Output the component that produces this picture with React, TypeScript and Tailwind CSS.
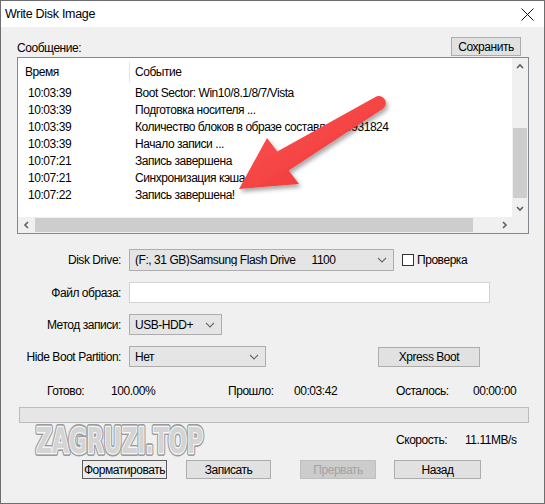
import React from "react";

const rows = [
  ["10:03:39", "Boot Sector: Win10/8.1/8/7/Vista"],
  ["10:03:39", "Подготовка носителя ..."],
  ["10:03:39", "Количество блоков в образе составляет 3931824"],
  ["10:03:39", "Начало записи ..."],
  ["10:07:21", "Запись завершена"],
  ["10:07:21", "Синхронизация кэша ..."],
  ["10:07:22", "Запись завершена!"],
];

function Chevron({ dir, className = "" }: { dir: "up" | "down" | "left" | "right"; className?: string }) {
  const pts = {
    up: "1,5 4,2 7,5",
    down: "1,2 4,5 7,2",
    left: "5,1 2,4 5,7",
    right: "3,1 6,4 3,7",
  }[dir];
  return (
    <svg width="8" height="8" viewBox="0 0 8 8" className={className}>
      <polyline points={pts} fill="none" stroke="#606060" strokeWidth="1.6" />
    </svg>
  );
}

function ComboArrow() {
  return (
    <svg width="10" height="6" viewBox="0 0 10 6" className="shrink-0">
      <polyline points="1,1 5,5 9,1" fill="none" stroke="#6a6a6a" strokeWidth="1.1" />
    </svg>
  );
}

function Combo({ width, children }: { width: string; children: React.ReactNode }) {
  return (
    <div className={`${width} h-full flex items-center bg-[#e5e5e5] border border-[#adadad] pl-[5px] pr-[6px]`}>
      <div className="flex-1 flex items-center whitespace-nowrap overflow-hidden">{children}</div>
      <ComboArrow />
    </div>
  );
}

function Button({ className = "", children }: { className?: string; children: React.ReactNode }) {
  return (
    <div className={`flex items-center justify-center border whitespace-nowrap ${className}`}>{children}</div>
  );
}

function Label({ children }: { children: React.ReactNode }) {
  return <span className="w-[120px] shrink-0 text-right mr-[8px]">{children}</span>;
}

export default function App() {
  return (
    <div className="relative w-[545px] h-[504px] bg-[#f0f0f0] border border-[#6e6e6e] overflow-hidden font-['Liberation_Sans',Arial,sans-serif] text-[12px] tracking-[-0.45px] text-black leading-none">
      {/* title bar */}
      <div className="h-[26px] bg-white flex items-center pl-[4px] pr-[10px]">
        <span className="text-[12.5px] tracking-[-0.3px]">Write Disk Image</span>
        <svg width="13" height="13" viewBox="0 0 13 13" className="ml-auto">
          <path d="M0.5 0.5 L12.5 12.5 M12.5 0.5 L0.5 12.5" stroke="#111" strokeWidth="1" />
        </svg>
      </div>

      {/* message header */}
      <div className="mt-[10px] h-[20px] flex">
        <span className="ml-[16px] self-end mb-[2px] leading-[14px]">Сообщение:</span>
        <Button className="ml-auto mr-[23px] w-[70px] h-[19px] bg-[#e1e1e1] border-[#adadad]">Сохранить</Button>
      </div>

      {/* log list */}
      <div className="ml-[16px] w-[512px] h-[177px] border border-[#828790] bg-white flex flex-col">
        <div className="flex h-[159px]">
          <div className="flex-1 overflow-hidden">
            <div className="h-[26px] flex items-center pt-[2px]">
              <span className="w-[111px] pl-[7px]">Время</span>
              <span className="w-px h-[20px] bg-[#e5e5e5]" />
              <span className="pl-[5px]">Событие</span>
            </div>
            {rows.map(([t, e], i) => (
              <div key={i} className="h-[17px] flex items-center whitespace-nowrap">
                <span className="w-[117px] pl-[10px] shrink-0">{t}</span>
                <span>{e}</span>
              </div>
            ))}
          </div>
          <div className="w-[16px] bg-[#f0f0f0] flex flex-col">
            <div className="h-[17px] flex items-center justify-center">
              <Chevron dir="up" />
            </div>
            <div className="flex-1 px-[1px]">
              <div className="mt-[53px] h-[70px] bg-[#cdcdcd]" />
            </div>
            <div className="h-[17px] flex items-center justify-center">
              <Chevron dir="down" />
            </div>
          </div>
        </div>
        <div className="flex h-[16px]">
          <div className="flex-1 flex bg-[#f0f0f0]">
            <div className="w-[17px] flex items-center justify-center">
              <Chevron dir="left" />
            </div>
            <div className="flex-1 py-[1px]">
              <div className="w-[438px] h-full bg-[#cdcdcd]" />
            </div>
            <div className="w-[17px] flex items-center justify-center">
              <Chevron dir="right" />
            </div>
          </div>
          <div className="w-[16px] bg-[#f0f0f0]" />
        </div>
      </div>

      {/* form */}
      <div className="mt-[15px] h-[22px] flex items-center">
        <Label>Disk Drive:</Label>
        <Combo width="w-[265px]">
          <span>(F:, 31 GB)Samsung Flash Drive</span>
          <span className="ml-[16px]">1100</span>
        </Combo>
        <span className="ml-[8px] w-[12px] h-[12px] border border-[#333] bg-white shrink-0" />
        <span className="ml-[3px]">Проверка</span>
      </div>
      <div className="mt-[11px] h-[21px] flex items-center">
        <Label>Файл образа:</Label>
        <div className="w-[361px] h-full bg-white border border-[#d3d3d3]" />
      </div>
      <div className="mt-[11px] h-[21px] flex items-center">
        <Label>Метод записи:</Label>
        <Combo width="w-[93px]">USB-HDD+</Combo>
      </div>
      <div className="mt-[11px] h-[21px] flex items-center">
        <Label>Hide Boot Partition:</Label>
        <Combo width="w-[137px]">Нет</Combo>
        <Button className="ml-[112px] w-[102px] h-[20px] bg-[#e1e1e1] border-[#adadad]">Xpress Boot</Button>
      </div>

      {/* status */}
      <div className="mt-[15px] h-[17px] flex items-center pl-[46px] whitespace-nowrap">
        <span className="w-[64px]">Готово:</span>
        <span className="w-[117px]">100.00%</span>
        <span className="w-[66px]">Прошло:</span>
        <span className="w-[102px]">00:03:42</span>
        <span className="w-[77px]">Осталось:</span>
        <span>00:00:00</span>
      </div>
      <div className="mt-[8px] ml-[18px] w-[510px] h-[16px] bg-[#e6e6e6] border border-[#bcbcbc]" />
      <div className="mt-[8px] h-[17px] flex items-center pl-[395px] whitespace-nowrap">
        <span className="w-[69px]">Скорость:</span>
        <span>11.11MB/s</span>
      </div>

      {/* buttons */}
      <div className="mt-[12px] h-[19px] flex pl-[81px]">
        <Button className="w-[85px] h-full bg-[#ececec] border-[#5c5c5c]">Форматировать</Button>
        <Button className="ml-[19px] w-[85px] h-full bg-[#e1e1e1] border-[#adadad]">Записать</Button>
        <Button className="ml-[29px] w-[76px] h-full bg-[#cccccc] border-[#bfbfbf] text-[#a3a3a3]">Прервать</Button>
        <Button className="ml-[18px] w-[87px] h-full bg-[#e1e1e1] border-[#adadad]">Назад</Button>
      </div>

      {/* watermark */}
      <svg className="absolute left-0 top-0 pointer-events-none" width="545" height="504">
        <g fontFamily="'DejaVu Sans', sans-serif" fontWeight="bold" fontSize="35">
          <text x="35" y="452" textLength="167" lengthAdjust="spacingAndGlyphs" fill="none" stroke="#9c9c9c" strokeWidth="6" strokeLinejoin="round">
            ZAGRUZI.TOP
          </text>
          <text x="35" y="452" textLength="167" lengthAdjust="spacingAndGlyphs" fill="#d4d4d4" stroke="#f7f7f7" strokeWidth="2.6" strokeLinejoin="round" style={{ paintOrder: "stroke" }}>
            ZAGRUZI.TOP
          </text>
        </g>
      </svg>

      {/* red arrow */}
      <svg className="absolute left-0 top-0 pointer-events-none" width="545" height="504">
        <defs>
          <filter id="sh" x="-20%" y="-20%" width="140%" height="140%">
            <feDropShadow dx="2" dy="3" stdDeviation="2.2" floodColor="#000" floodOpacity="0.35" />
          </filter>
          <linearGradient id="rg" x1="0" y1="0" x2="1" y2="1">
            <stop offset="0" stopColor="#ff5656" />
            <stop offset="1" stopColor="#ec3434" />
          </linearGradient>
        </defs>
        <g filter="url(#sh)" fill="url(#rg)">
          <path d="M374.4 96 L276.3 150.6 L266 137 L238 188 L298 183 L287.7 169.4 L381.6 108 A7 7 0 0 0 374.4 96 Z" />
        </g>
      </svg>
    </div>
  );
}
